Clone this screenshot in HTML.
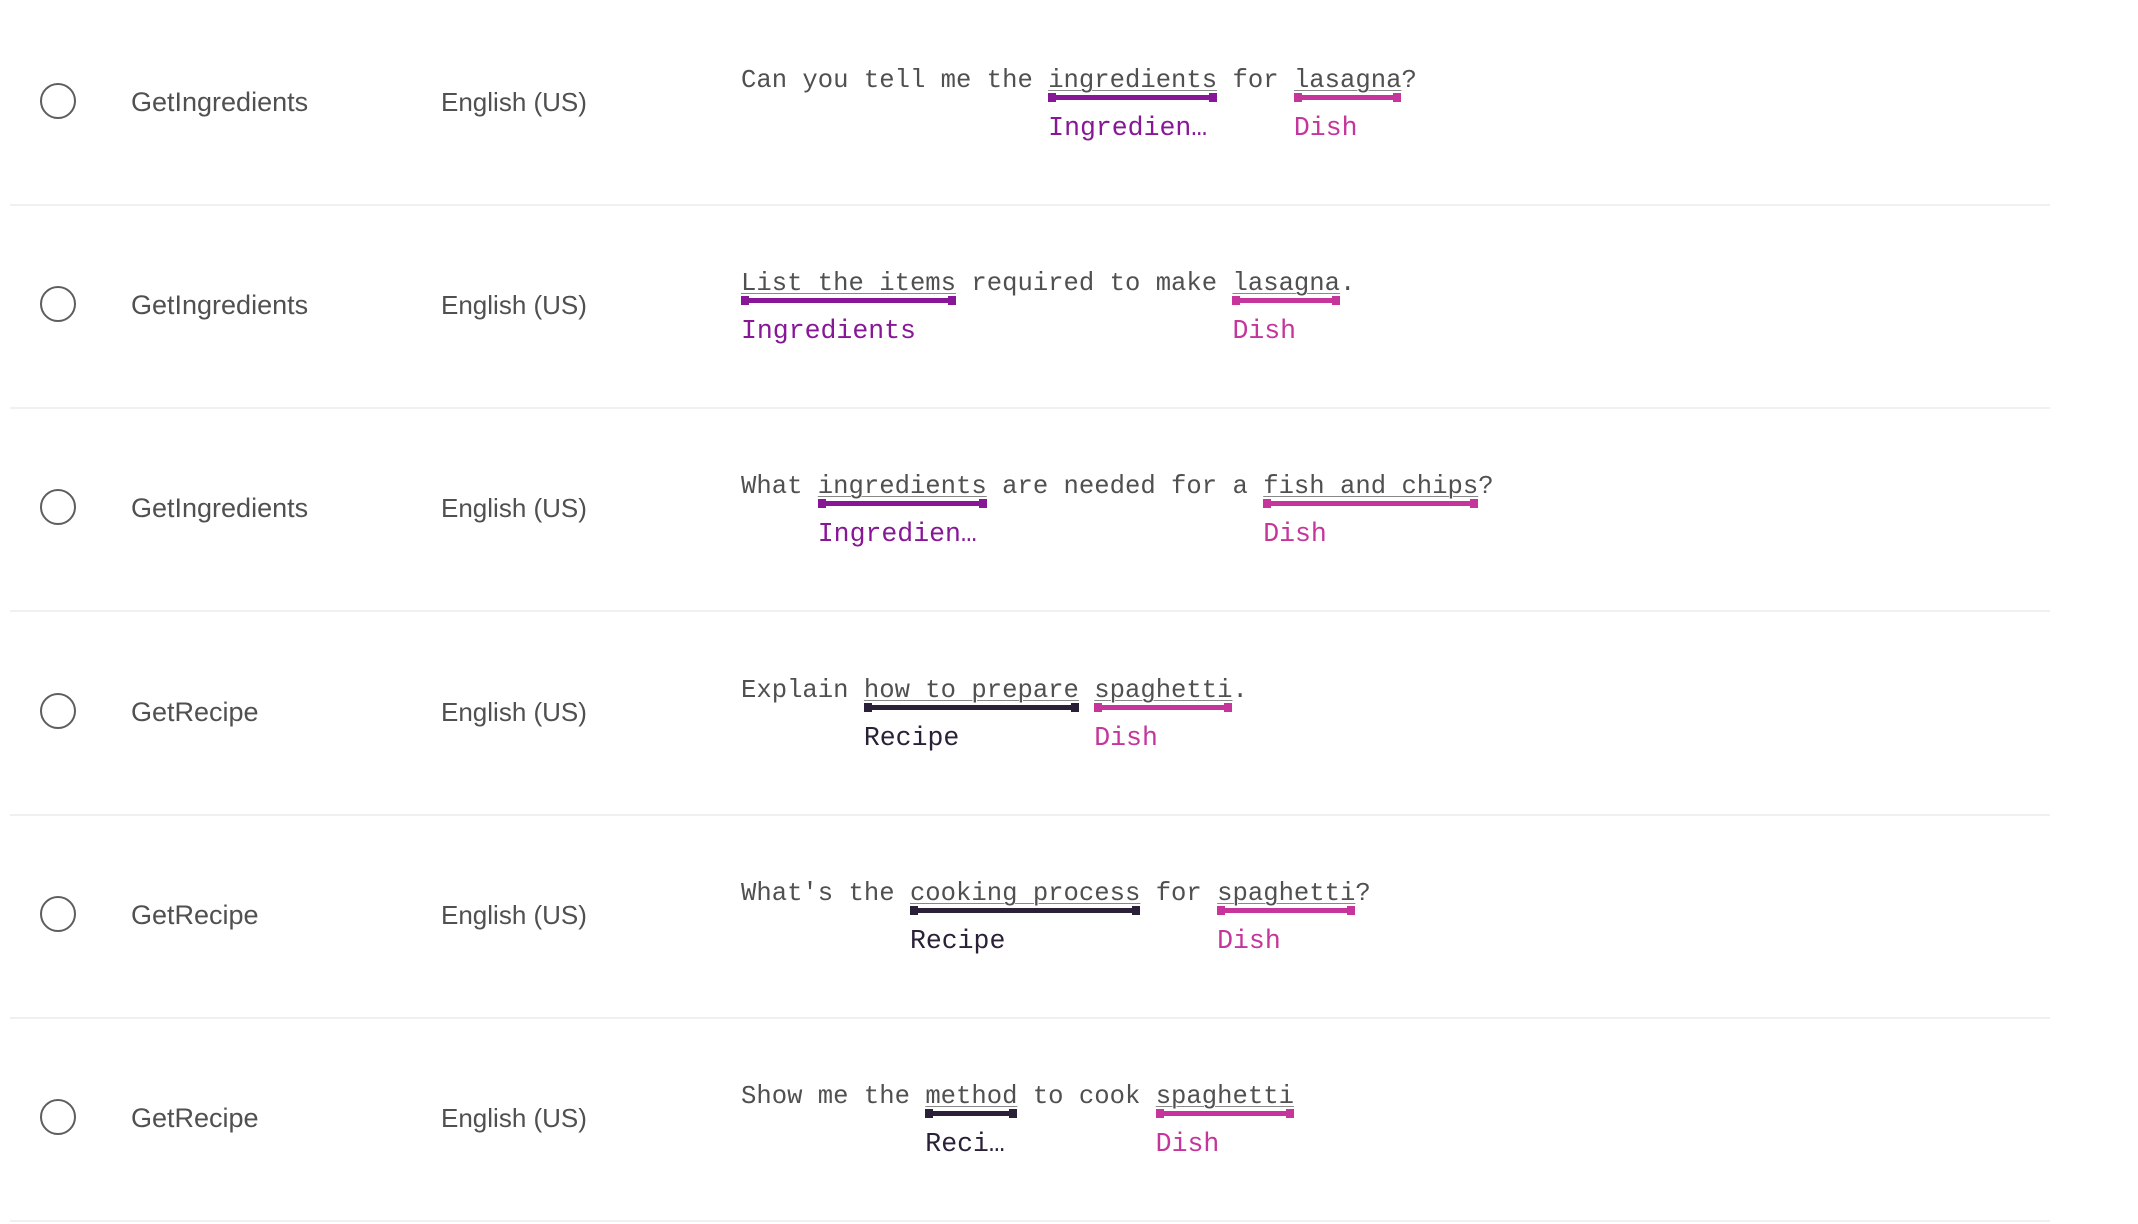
<!DOCTYPE html>
<html><head><meta charset="utf-8">
<style>
html,body{margin:0;padding:0;background:#fff;width:2138px;height:1224px;overflow:hidden;}
.row{position:absolute;left:0;width:2138px;height:203px;}
.sep{position:absolute;left:10px;width:2040px;height:2px;background:#f0f0f0;bottom:0;}
.radio{position:absolute;left:40px;top:80px;width:32px;height:32px;border:2px solid #605e5c;border-radius:50%;}
.intent,.lang{position:absolute;top:81px;font-family:"Liberation Sans",sans-serif;font-size:27px;color:#505050;line-height:36px;white-space:nowrap;}
.intent{left:131px;}
.lang{left:441px;font-size:26px;}
.sent{position:absolute;left:741px;top:0;font-family:"Liberation Mono",monospace;font-size:25.6px;color:#505050;white-space:pre;}
.txt{position:absolute;left:0;top:63px;line-height:30px;}
.u{text-decoration:underline;text-decoration-color:#888;text-decoration-thickness:1px;text-underline-offset:3px;}
.bar{position:absolute;top:92px;height:5px;}
.bar:before,.bar:after{content:"";position:absolute;top:-2px;width:8px;height:9px;background:inherit;}
.bar:before{left:0}.bar:after{right:0}
.lab{position:absolute;top:110px;line-height:30px;}
.lab span{font-size:26.5px;}
.p{color:#881798;background:#881798}
.k{color:#c5359b;background:#c5359b}
.d{color:#2a2139;background:#2a2139}
.lab.p,.lab.k,.lab.d{background:none}
</style></head><body>

<div class="row" style="top:3px">
<div class="radio"></div><div class="intent">GetIngredients</div><div class="lang">English (US)</div>
<div class="sent">
<div class="txt">Can you tell me the <span class="u">ingredients</span> for <span class="u">lasagna</span>?</div>
<div class="bar p" style="left:20ch;width:11ch"></div>
<div class="bar k" style="left:36ch;width:7ch"></div>
<div class="lab p" style="left:20ch"><span>Ingredien…</span></div>
<div class="lab k" style="left:36ch"><span>Dish</span></div>
</div>
<div class="sep"></div></div>

<div class="row" style="top:206px">
<div class="radio"></div><div class="intent">GetIngredients</div><div class="lang">English (US)</div>
<div class="sent">
<div class="txt"><span class="u">List the items</span> required to make <span class="u">lasagna</span>.</div>
<div class="bar p" style="left:0;width:14ch"></div>
<div class="bar k" style="left:32ch;width:7ch"></div>
<div class="lab p" style="left:0"><span>Ingredients</span></div>
<div class="lab k" style="left:32ch"><span>Dish</span></div>
</div>
<div class="sep"></div></div>

<div class="row" style="top:409px">
<div class="radio"></div><div class="intent">GetIngredients</div><div class="lang">English (US)</div>
<div class="sent">
<div class="txt">What <span class="u">ingredients</span> are needed for a <span class="u">fish and chips</span>?</div>
<div class="bar p" style="left:5ch;width:11ch"></div>
<div class="bar k" style="left:34ch;width:14ch"></div>
<div class="lab p" style="left:5ch"><span>Ingredien…</span></div>
<div class="lab k" style="left:34ch"><span>Dish</span></div>
</div>
<div class="sep"></div></div>

<div class="row" style="top:613px">
<div class="radio"></div><div class="intent">GetRecipe</div><div class="lang">English (US)</div>
<div class="sent">
<div class="txt">Explain <span class="u">how to prepare</span> <span class="u">spaghetti</span>.</div>
<div class="bar d" style="left:8ch;width:14ch"></div>
<div class="bar k" style="left:23ch;width:9ch"></div>
<div class="lab d" style="left:8ch"><span>Recipe</span></div>
<div class="lab k" style="left:23ch"><span>Dish</span></div>
</div>
<div class="sep"></div></div>

<div class="row" style="top:816px">
<div class="radio"></div><div class="intent">GetRecipe</div><div class="lang">English (US)</div>
<div class="sent">
<div class="txt">What's the <span class="u">cooking process</span> for <span class="u">spaghetti</span>?</div>
<div class="bar d" style="left:11ch;width:15ch"></div>
<div class="bar k" style="left:31ch;width:9ch"></div>
<div class="lab d" style="left:11ch"><span>Recipe</span></div>
<div class="lab k" style="left:31ch"><span>Dish</span></div>
</div>
<div class="sep"></div></div>

<div class="row" style="top:1019px">
<div class="radio"></div><div class="intent">GetRecipe</div><div class="lang">English (US)</div>
<div class="sent">
<div class="txt">Show me the <span class="u">method</span> to cook <span class="u">spaghetti</span></div>
<div class="bar d" style="left:12ch;width:6ch"></div>
<div class="bar k" style="left:27ch;width:9ch"></div>
<div class="lab d" style="left:12ch"><span>Reci…</span></div>
<div class="lab k" style="left:27ch"><span>Dish</span></div>
</div>
<div class="sep"></div></div>

</body></html>
